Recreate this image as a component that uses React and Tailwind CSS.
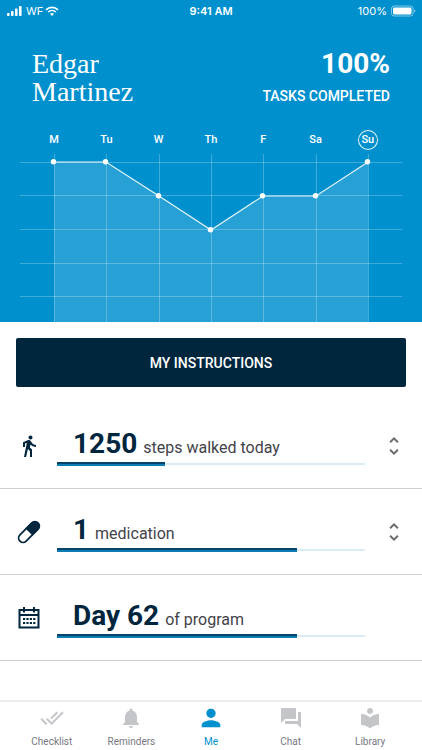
import React from "react";
import {
  MdDirectionsWalk,
  MdDoneAll,
  MdForum,
  MdLocalLibrary,
  MdNotifications,
  MdPerson,
  MdUnfoldMore,
} from "react-icons/md";

const DAYS = [
  { label: "M", x: 54, y: 10 },
  { label: "Tu", x: 106, y: 10 },
  { label: "W", x: 159, y: 44 },
  { label: "Th", x: 211, y: 78 },
  { label: "F", x: 263, y: 44 },
  { label: "Sa", x: 316, y: 44 },
  { label: "Su", x: 368, y: 10, today: true },
];

const GRID_LINES = [11, 44, 78, 112, 145];

const PillIcon = () => (
  <svg viewBox="0 0 24 24" className="h-6 w-6" aria-hidden="true">
    <g transform="rotate(-45 12 12)">
      <rect
        x="-0.8"
        y="7.6"
        width="25.6"
        height="8.8"
        rx="4.4"
        fill="none"
        stroke="currentColor"
        strokeWidth="1.8"
      />
      <path d="M12 6.9h7.9a5.1 5.1 0 0 1 0 10.2H12z" fill="currentColor" />
    </g>
  </svg>
);

const CalendarIcon = () => (
  <svg viewBox="0 0 24 24" className="h-6 w-6" aria-hidden="true">
    <path
      d="M2.5 4h19v17.5h-19zM2.5 9h19"
      fill="none"
      stroke="currentColor"
      strokeWidth="2"
    />
    <path
      d="M7 1v5.5M17 1v5.5"
      fill="none"
      stroke="currentColor"
      strokeWidth="2"
    />
    <path
      d="M6 13h12.4M6 17h12.4"
      fill="none"
      stroke="currentColor"
      strokeWidth="2.2"
      strokeDasharray="2.2 1.2"
    />
  </svg>
);

const ITEMS = [
  {
    id: "steps",
    icon: <MdDirectionsWalk className="h-6 w-6" />,
    value: "1250",
    text: "steps walked today",
    percent: 35,
    expandable: true,
  },
  {
    id: "medication",
    icon: <PillIcon />,
    value: "1",
    text: "medication",
    percent: 78,
    expandable: true,
  },
  {
    id: "program",
    icon: <CalendarIcon />,
    value: "Day 62",
    text: "of program",
    percent: 78,
  },
];

const TABS = [
  { label: "Checklist", icon: <MdDoneAll className="h-6 w-6" /> },
  { label: "Reminders", icon: <MdNotifications className="h-6 w-6" /> },
  { label: "Me", icon: <MdPerson className="h-7 w-7" />, active: true },
  { label: "Chat", icon: <MdForum className="h-6 w-6" /> },
  { label: "Library", icon: <MdLocalLibrary className="h-6 w-6" /> },
];

const StatusBar = () => (
  <div className="grid h-[22px] grid-cols-3 items-center px-1.5 font-['Inter',sans-serif] text-[11px] leading-4">
    <div className="flex items-center gap-1">
      <svg viewBox="0 0 16 10" className="h-2.5 w-4" fill="currentColor" aria-hidden="true">
        <rect x="1" y="7" width="2.6" height="3" rx="0.8" />
        <rect x="5" y="5" width="2.6" height="5" rx="0.8" />
        <rect x="9" y="2.6" width="2.6" height="7.4" rx="0.8" />
        <rect x="13" y="0" width="2.6" height="10" rx="0.8" />
      </svg>
      <span className="flex items-center gap-0.5">
        WF
        <svg viewBox="0 0 14 10" className="h-2.5 w-3.5" fill="none" stroke="currentColor" aria-hidden="true">
          <path d="M1 3.8a8.6 8.6 0 0 1 12 0" strokeWidth="1.7" />
          <path d="M3.2 6a5.5 5.5 0 0 1 7.6 0" strokeWidth="1.6" />
          <path d="M5 7.8a3 3 0 0 1 4 0L7 9.9z" fill="currentColor" stroke="none" />
        </svg>
      </span>
    </div>
    <span className="text-center font-semibold">9:41 AM</span>
    <div className="flex items-center justify-end gap-1">
      <span>100%</span>
      <svg viewBox="0 0 25 12" className="h-3 w-[25px]" aria-hidden="true">
        <rect x="0.5" y="1" width="21.5" height="10" rx="2.6" fill="none" stroke="white" strokeOpacity="0.5" />
        <rect x="2" y="2.5" width="18.5" height="7" rx="1.4" fill="white" />
        <path d="M23.2 4.2v3.6q1.3-.5 1.3-1.8t-1.3-1.8z" fill="white" fillOpacity="0.5" />
      </svg>
    </div>
  </div>
);

const WeekChart = () => {
  const line = DAYS.map((day) => `${day.x},${day.y}`).join(" ");

  return (
    <div>
      <div className="grid grid-cols-7 px-7 text-[11px] font-medium leading-5">
        {DAYS.map((day) => (
          <div key={day.label} className="flex justify-center">
            <span
              className={
                day.today
                  ? "h-5 w-5 rounded-full text-center ring-1 ring-white/90 ring-inset"
                  : "text-center"
              }
            >
              {day.label}
            </span>
          </div>
        ))}
      </div>
      <svg viewBox="0 0 422 170" className="mt-0.5 block w-full" role="img" aria-label="Tasks completed this week">
        <polygon points={`54,170 ${line} 368,170`} fill="white" fillOpacity="0.15" />
        <g stroke="white" strokeOpacity="0.25">
          {GRID_LINES.map((y) => (
            <line key={y} x1="20" x2="402" y1={y - 0.5} y2={y - 0.5} />
          ))}
          {DAYS.map((day) => (
            <line key={day.label} x1={day.x + 0.5} x2={day.x + 0.5} y1="2" y2="170" />
          ))}
        </g>
        <polyline points={line} fill="none" stroke="white" strokeOpacity="0.9" strokeWidth="1.2" />
        {DAYS.map((day) => (
          <circle key={day.label} cx={day.x - 0.5} cy={day.y - 0.3} r="2.7" fill="white" />
        ))}
      </svg>
    </div>
  );
};

const ProgressRow = ({ item }) => (
  <li className="flex h-[86px] items-center border-b border-[#cfcfcf]">
    <div className="flex w-[57px] shrink-0 justify-center text-[#00263e]">
      {item.icon}
    </div>
    <div className="min-w-0 flex-1">
      <p className="flex items-baseline gap-1.5 pl-4">
        <span className="text-[28px] leading-9 font-bold text-[#00263e]">{item.value}</span>
        <span className="text-base leading-6 text-[#434349]">{item.text}</span>
      </p>
      <div
        className="flex h-1 items-center"
        role="progressbar"
        aria-label={item.text}
        aria-valuenow={item.percent}
        aria-valuemin={0}
        aria-valuemax={100}
      >
        <div
          className="h-1 border-t-2 border-[#064468] bg-[#0c7db4]"
          style={{ width: `${item.percent}%` }}
        />
        <div className="h-0.5 flex-1 bg-[#d9edf7]" />
      </div>
    </div>
    <div className="flex w-[57px] shrink-0 justify-center">
      {item.expandable && (
        <button type="button" aria-label={`Expand ${item.text}`} className="text-[#6b6b70]">
          <MdUnfoldMore className="h-6 w-6" />
        </button>
      )}
    </div>
  </li>
);

const App = () => {
  return (
    <div className="flex min-h-screen flex-col bg-white font-['Roboto',sans-serif]">
      <header className="bg-[#0090ce] text-white">
        <StatusBar />
        <div className="flex items-start justify-between px-8 pt-7">
          <h1 className="font-['Liberation_Serif',serif] text-[28px] leading-7">
            Edgar
            <br />
            Martinez
          </h1>
          <div className="text-right">
            <p className="text-[28px] font-bold leading-7">100%</p>
            <p className="mt-2 text-sm font-medium">TASKS COMPLETED</p>
          </div>
        </div>
        <div className="pt-6">
          <WeekChart />
        </div>
      </header>

      <main>
        <div className="p-4">
          <button
            type="button"
            className="h-[49px] w-full rounded-xs bg-[#00263e] text-sm font-medium text-white"
          >
            MY INSTRUCTIONS
          </button>
        </div>
        <ul>
          {ITEMS.map((item) => (
            <ProgressRow key={item.id} item={item} />
          ))}
        </ul>
      </main>

      <nav className="mt-auto grid grid-cols-5 border-t-2 border-[#eeeeee] px-3">
        {TABS.map((tab) => (
          <a
            key={tab.label}
            href="#"
            aria-current={tab.active ? "page" : undefined}
            className={`flex flex-col items-center text-[10px] leading-4 ${
              tab.active ? "text-[#0090ce]" : "text-[#77777f]"
            }`}
          >
            <span
              className={`flex h-8 items-center ${
                tab.active ? "text-[#0090ce]" : "text-[#c3c5c9]"
              }`}
            >
              {tab.icon}
            </span>
            {tab.label}
          </a>
        ))}
      </nav>
    </div>
  );
};

export default App;
